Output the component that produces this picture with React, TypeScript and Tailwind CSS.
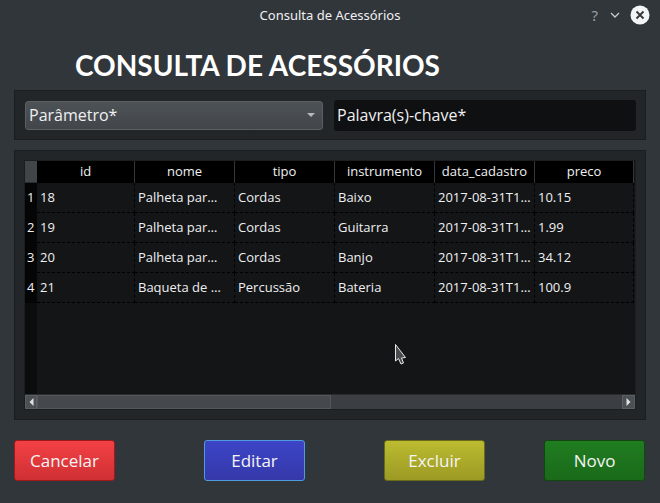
import React from "react";

const FONT = { fontFamily: "'Open Sans', 'DejaVu Sans', sans-serif" };

const columns = [
  { key: "id", label: "id", w: "w-[98px]" },
  { key: "nome", label: "nome", w: "w-[100px]" },
  { key: "tipo", label: "tipo", w: "w-[100px]" },
  { key: "instrumento", label: "instrumento", w: "w-[100px]" },
  { key: "data", label: "data_cadastro", w: "w-[100px]" },
  { key: "preco", label: "preco", w: "w-[99px]" },
];

// textos já cortados como a tabela mostra
const rows = [
  ["18", "Palheta par…", "Cordas", "Baixo", "2017-08-31T1…", "10.15"],
  ["19", "Palheta par…", "Cordas", "Guitarra", "2017-08-31T1…", "1.99"],
  ["20", "Palheta par…", "Cordas", "Banjo", "2017-08-31T1…", "34.12"],
  ["21", "Baqueta de …", "Percussão", "Bateria", "2017-08-31T1…", "100.9"],
];

function TitleBar() {
  return (
    <div className="relative h-[32px] flex items-center justify-center">
      <span
        className="text-[13px] text-[#eff0f1]"
        style={{ fontFamily: "'Noto Sans', sans-serif" }}
      >
        Consulta de Acessórios
      </span>
      <div className="absolute right-[10px] top-[5px] flex items-center gap-[8px]">
        <span
          className="text-[15px] text-[#9a9ea2] leading-none"
          style={{ fontFamily: "'Noto Sans', sans-serif" }}
        >
          ?
        </span>
        <svg width="14" height="14" viewBox="0 0 14 14" className="ml-[2px]">
          <path d="M3 5 L7 9 L11 5" stroke="#c8cbce" strokeWidth="1.3" fill="none" />
        </svg>
        <svg width="20" height="20" viewBox="0 0 20 20">
          <circle cx="10" cy="10" r="9.5" fill="#f3f4f5" />
          <path d="M6.5 6.5 L13.5 13.5 M13.5 6.5 L6.5 13.5" stroke="#31363b" strokeWidth="1.8" />
        </svg>
      </div>
    </div>
  );
}

function Filters() {
  return (
    <div className="mx-[14px] h-[50px] bg-[#232629] border border-[#1b1e20] flex items-center pl-[10px] pr-[9px] gap-[11px]">
      <div className="w-[298px] h-[29px] rounded-[3px] border border-[#5b5f64] bg-gradient-to-b from-[#4d5257] to-[#42464b] flex items-center pl-[3px] pr-[6px]">
        <span className="flex-1 text-[16px] text-[#eff0f1]">Parâmetro*</span>
        <svg width="10" height="6" viewBox="0 0 10 6">
          <path d="M1 1 L9 1 L5 5 Z" fill="#b8bbbe" />
        </svg>
      </div>
      <div className="flex-1 h-[31px] rounded-[3px] bg-[#0f1012] flex items-center pl-[3px]">
        <span className="text-[16px] text-[#eff0f1]">Palavra(s)-chave*</span>
      </div>
    </div>
  );
}

function Table() {
  return (
    <div className="mx-[14px] mt-[10px] h-[270px] bg-[#232629] border border-[#1b1e20] p-[9px]">
      <div className="h-full border border-[#1b1e20] bg-[#141517] flex flex-col overflow-hidden">
        <div className="flex-1 flex">
          <div className="w-[12px] flex flex-col bg-[#0b0c0d]">
            <div className="h-[22px] bg-[#41454a] border-b border-[#2c2f32]" />
            {rows.map((_, i) => (
              <div
                key={i}
                className="h-[30px] bg-[#050505] text-[13px] text-[#eff0f1] flex items-center pl-[2px]"
              >
                {i + 1}
              </div>
            ))}
          </div>
          <div className="flex flex-col">
            <div className="flex h-[22px] bg-black">
              {columns.map((c) => (
                <div
                  key={c.key}
                  className={`${c.w} shrink-0 border-r border-[#34373a] text-[13px] text-[#eff0f1] flex items-center justify-center`}
                >
                  {c.label}
                </div>
              ))}
            </div>
            {rows.map((r, i) => (
              <div key={i} className="flex h-[30px]">
                {r.map((v, j) => (
                  <div
                    key={j}
                    className={`${columns[j].w} shrink-0 border-r border-b border-dashed border-black text-[13px] text-[#eff0f1] flex items-center pl-[3px] overflow-hidden whitespace-nowrap`}
                  >
                    {v}
                  </div>
                ))}
              </div>
            ))}
          </div>
        </div>
        <div className="h-[15px] bg-[#3b3f43] border-t border-[#2a2d30] flex">
          <div className="w-[12px] bg-[#4b5055] border border-[#5a5e62] flex items-center justify-center">
            <svg width="5" height="8" viewBox="0 0 5 8">
              <path d="M4.5 0 L0.5 4 L4.5 8 Z" fill="#dfe1e3" />
            </svg>
          </div>
          <div className="w-[294px] bg-[#45494e] border border-[#54585c]" />
          <div className="flex-1" />
          <div className="w-[13px] bg-[#4b5055] border border-[#5a5e62] flex items-center justify-center">
            <svg width="5" height="8" viewBox="0 0 5 8">
              <path d="M0.5 0 L4.5 4 L0.5 8 Z" fill="#dfe1e3" />
            </svg>
          </div>
        </div>
      </div>
    </div>
  );
}

function Buttons() {
  const base = "w-[101px] h-[41px] rounded-[3px] border text-[17px] text-[#f5f5f5]";
  return (
    <div className="flex pt-[20px] pl-[14px]">
      <button className={`${base} border-[#a2191c] bg-gradient-to-b from-[#f34145] to-[#cf3033]`}>
        Cancelar
      </button>
      <button className={`${base} ml-[89px] border-[#4f9be0] bg-gradient-to-b from-[#3c45c8] to-[#3538a8]`}>
        Editar
      </button>
      <button className={`${base} ml-[79px] border-[#6b6b1c] bg-gradient-to-b from-[#bcbb30] to-[#9c9a24]`}>
        Excluir
      </button>
      <button className={`${base} ml-[59px] border-[#11480f] bg-gradient-to-b from-[#207d20] to-[#1a6a1a]`}>
        Novo
      </button>
    </div>
  );
}

export default function App() {
  return (
    <div className="relative w-[660px] h-[503px] bg-[#31363b] overflow-hidden" style={FONT}>
      <TitleBar />
      <div className="h-[58px] pl-[75px] pt-[8px] flex items-center">
        <h1
          className="text-[28px] font-bold text-white leading-none"
          style={{ fontFamily: "Lato, sans-serif" }}
        >
          CONSULTA DE ACESSÓRIOS
        </h1>
      </div>
      <Filters />
      <Table />
      <Buttons />
      <svg
        className="absolute left-[395px] top-[344px]"
        width="12" height="22" viewBox="0 0 12 22"
      >
        <path d="M0.5 0.5 L0.5 17 L3.5 14.5 L6 20 L8.5 19 L6.5 14 L10.5 13.5 Z" fill="#4a4d50" stroke="#e8e8e8" strokeWidth="1" />
      </svg>
    </div>
  );
}
